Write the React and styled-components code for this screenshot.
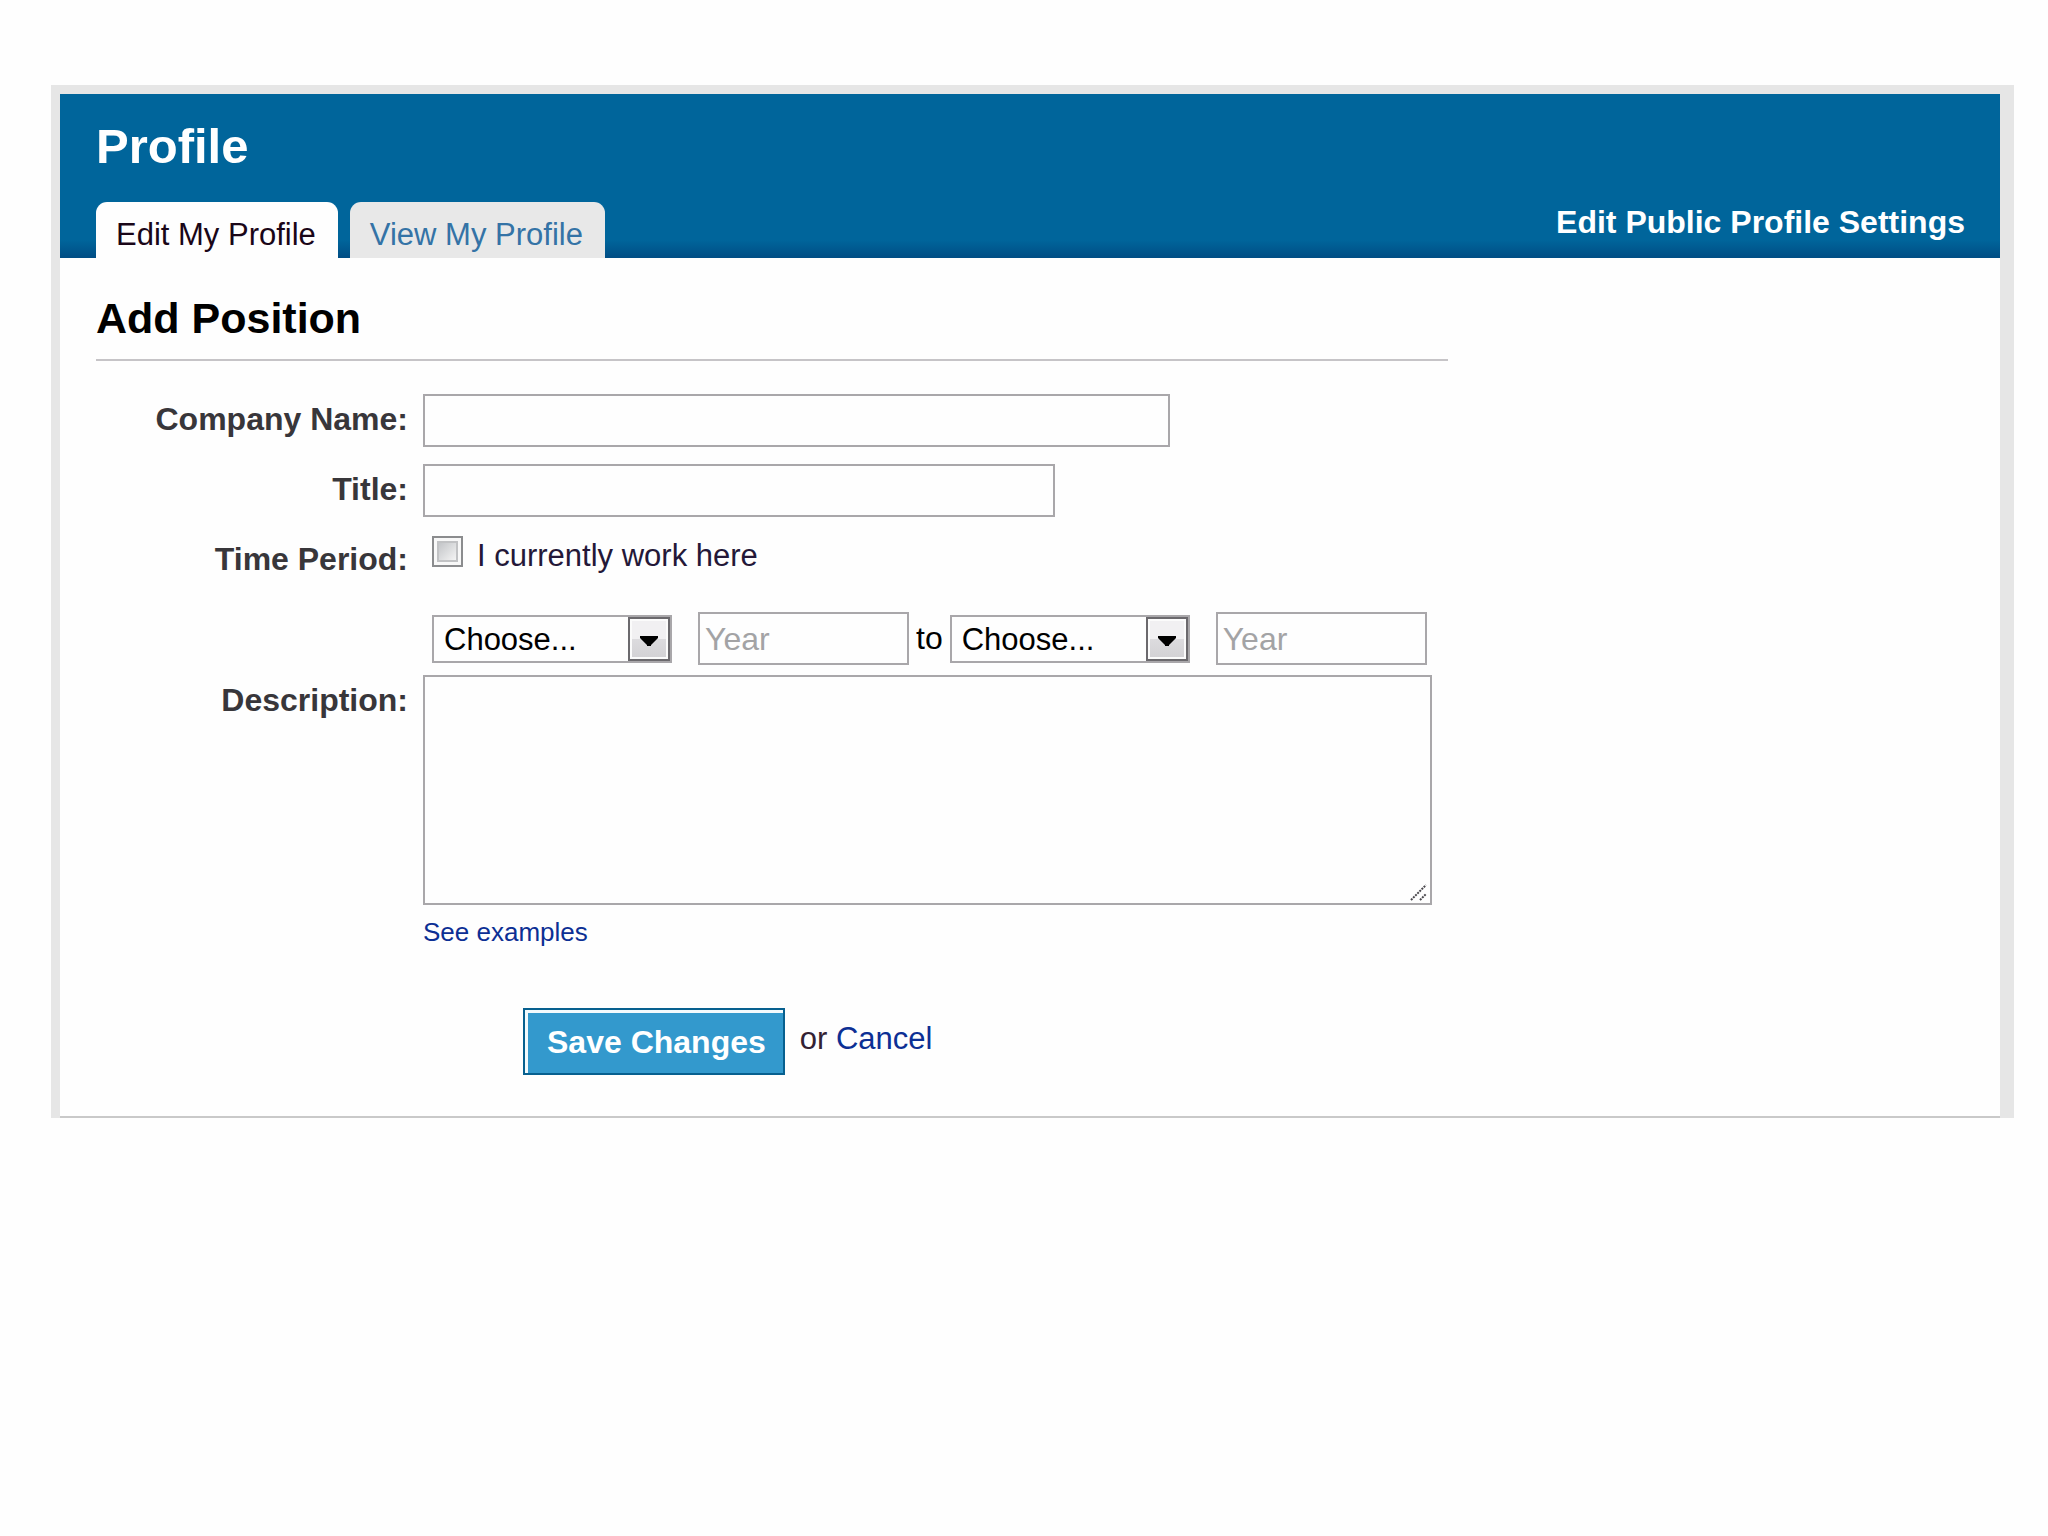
import styled, { createGlobalStyle } from "styled-components";

function MonthSelect({ label }) {
  return (
    <SelectBox>
      <Select aria-label={label}>
        <option>Choose...</option>
      </Select>
      <SelectArrow>
        <svg width="18" height="10" viewBox="0 0 18 10">
          <path d="M0 0h18v2l-7 7v1H7V9L0 2z" fill="#000" />
        </svg>
      </SelectArrow>
    </SelectBox>
  );
}

function App() {
  return (
    <>
      <GlobalStyle />
      <Panel>
        <Header>
          <PageTitle>Profile</PageTitle>
          <HeaderRow>
            <Tabs>
              <Tab href="#edit" $active>
                Edit My Profile
              </Tab>
              <Tab href="#view">View My Profile</Tab>
            </Tabs>
            <SettingsLink href="#settings">Edit Public Profile Settings</SettingsLink>
          </HeaderRow>
        </Header>
        <Content>
          <SectionTitle>Add Position</SectionTitle>
          <Form onSubmit={(e) => e.preventDefault()}>
            <Row>
              <Label htmlFor="company">Company Name:</Label>
              <TextInput id="company" type="text" $width={747} />
            </Row>
            <Row>
              <Label htmlFor="title">Title:</Label>
              <TextInput id="title" type="text" $width={632} />
            </Row>
            <Row>
              <Label as="span" id="period">
                Time Period:
              </Label>
              <Period role="group" aria-labelledby="period">
                <CheckLine>
                  <Checkbox id="current" type="checkbox" />
                  <CheckLabel htmlFor="current">I currently work here</CheckLabel>
                </CheckLine>
                <Dates>
                  <DatePair>
                    <MonthSelect label="Start month" />
                    <TextInput type="text" placeholder="Year" aria-label="Start year" $width={211} />
                  </DatePair>
                  <span>to</span>
                  <DatePair>
                    <MonthSelect label="End month" />
                    <TextInput type="text" placeholder="Year" aria-label="End year" $width={211} />
                  </DatePair>
                </Dates>
              </Period>
            </Row>
            <Row>
              <Label htmlFor="description">Description:</Label>
              <DescriptionCell>
                <AreaBox>
                  <TextArea id="description" />
                  <Grip width="18" height="18" viewBox="0 0 18 18">
                    <path
                      d="M1 17L16 2M10 17L16 11"
                      stroke="#49474c"
                      strokeWidth="2"
                      strokeDasharray="2 1"
                      fill="none"
                    />
                  </Grip>
                </AreaBox>
                <ExamplesLink href="#examples">See examples</ExamplesLink>
              </DescriptionCell>
            </Row>
            <Actions>
              <SaveButton type="submit">Save Changes</SaveButton>
              <OrCancel>
                or <a href="#cancel">Cancel</a>
              </OrCancel>
            </Actions>
          </Form>
        </Content>
      </Panel>
    </>
  );
}

const GlobalStyle = createGlobalStyle`
  *, *::before, *::after {
    box-sizing: border-box;
  }

  body {
    margin: 0;
    background-color: #fefefe;
    color: #000;
    font-family: "Liberation Sans", Arial, sans-serif;
    font-size: 32px;
  }

  a {
    color: #0c2f94;
    text-decoration: none;
  }
`;

const Panel = styled.main`
  margin: 85px 34px 0 51px;
  border: solid #e6e6e6;
  border-width: 9px 14px 0 9px;
`;

const Header = styled.header`
  padding: 0 35px 0 36px;
  background: #00659b linear-gradient(to top, #004d84, #00659b 18px);
`;

const PageTitle = styled.h1`
  margin: 0;
  padding-bottom: 4px;
  font-size: 49px;
  line-height: 104px;
  color: #fff;
`;

const HeaderRow = styled.div`
  display: flex;
  align-items: flex-start;
  justify-content: space-between;
`;

const Tabs = styled.nav`
  display: flex;
  gap: 12px;
`;

const Tab = styled.a`
  padding: 10px 22px 0 20px;
  border-radius: 11px 11px 0 0;
  font-size: 31px;
  line-height: 46px;
  background-color: ${({ $active }) => ($active ? "#fefefe" : "#e8e8e8")};
  color: ${({ $active }) => ($active ? "#1a0618" : "#3473a6")};
`;

const SettingsLink = styled.a`
  line-height: 40px;
  font-weight: bold;
  color: #fff;
`;

const Content = styled.section`
  padding: 19px 36px 41px;
  border-bottom: 2px solid #c9c9c9;
`;

const SectionTitle = styled.h2`
  max-width: 1352px;
  margin: 0 0 33px;
  border-bottom: 2px solid #c6c4c7;
  font-size: 43px;
  line-height: 82px;
`;

const Form = styled.form`
  max-width: 1352px;
`;

const Row = styled.div`
  display: grid;
  grid-template-columns: 312px 1fr;
  column-gap: 15px;
  min-height: 70px;
  align-items: start;
`;

const Label = styled.label`
  text-align: right;
  font-weight: bold;
  line-height: 50px;
  color: #38363a;
`;

const TextInput = styled.input`
  width: ${({ $width }) => $width}px;
  max-width: 100%;
  height: 53px;
  padding: 2px 5px 0;
  border: 2px solid #a9a7aa;
  border-radius: 0;
  background-color: #fefefe;
  font: inherit;

  &::placeholder {
    color: #a3a3a5;
    opacity: 1;
  }
`;

const Period = styled.div`
  padding-left: 9px;
  padding-bottom: 10px;
`;

const CheckLine = styled.div`
  display: flex;
  align-items: flex-start;
  gap: 14px;
  height: 78px;
`;

const Checkbox = styled.input`
  appearance: none;
  width: 31px;
  height: 31px;
  margin: 2px 0 0;
  padding: 5px;
  border: 2px solid #8b8c8e;
  background: linear-gradient(135deg, #c3c5c8, #f4f4f4) content-box, #f6f6f6;
  box-shadow: inset 0 0 0 3px #f8f8f8, inset 0 0 0 5px #c1c2c4;
`;

const CheckLabel = styled.label`
  font-size: 31px;
  line-height: 44px;
  color: #241838;
`;

const Dates = styled.div`
  display: flex;
  align-items: center;
  gap: 7px;
`;

const DatePair = styled.div`
  display: flex;
  align-items: center;
  gap: 26px;
`;

const SelectBox = styled.div`
  position: relative;
  width: 240px;
`;

const Select = styled.select`
  appearance: none;
  display: block;
  width: 100%;
  height: 48px;
  padding: 2px 44px 0 10px;
  border: 2px solid #a9a7aa;
  border-radius: 0;
  background-color: #fefefe;
  color: #000;
  font: inherit;
  font-size: 31px;
`;

const SelectArrow = styled.span`
  position: absolute;
  top: 2px;
  right: 2px;
  bottom: 2px;
  display: flex;
  align-items: center;
  justify-content: center;
  width: 42px;
  padding-top: 4px;
  border: 2px solid #6b696d;
  background: linear-gradient(#f1f0f2 50%, #dcdbde 50%, #d2d1d4);
  box-shadow: inset 0 0 0 2px #fbfbfb;
  pointer-events: none;
`;

const DescriptionCell = styled.div`
  display: flex;
  flex-direction: column;
  align-items: flex-start;
  gap: 7px;
`;

const AreaBox = styled.div`
  position: relative;
  width: 100%;
  max-width: 1009px;
`;

const TextArea = styled.textarea`
  display: block;
  width: 100%;
  height: 230px;
  padding: 6px;
  border: 2px solid #a9a7aa;
  background-color: #fefefe;
  font: inherit;
  resize: none;
`;

const Grip = styled.svg`
  position: absolute;
  right: 4px;
  bottom: 4px;
  pointer-events: none;
`;

const ExamplesLink = styled.a`
  font-size: 26px;
  line-height: 40px;
`;

const Actions = styled.div`
  display: flex;
  align-items: flex-start;
  gap: 15px;
  margin-top: 56px;
  padding-left: 427px;
`;

const SaveButton = styled.button`
  height: 67px;
  padding: 2px 17px 0 22px;
  border: 2px solid #07608f;
  border-radius: 0;
  background-color: #3399cd;
  box-shadow: inset 3px 3px 0 #f2fafd;
  color: #fff;
  font: inherit;
  font-weight: bold;
`;

const OrCancel = styled.span`
  font-size: 31px;
  line-height: 61px;
  color: #332233;
`;

export default App;
